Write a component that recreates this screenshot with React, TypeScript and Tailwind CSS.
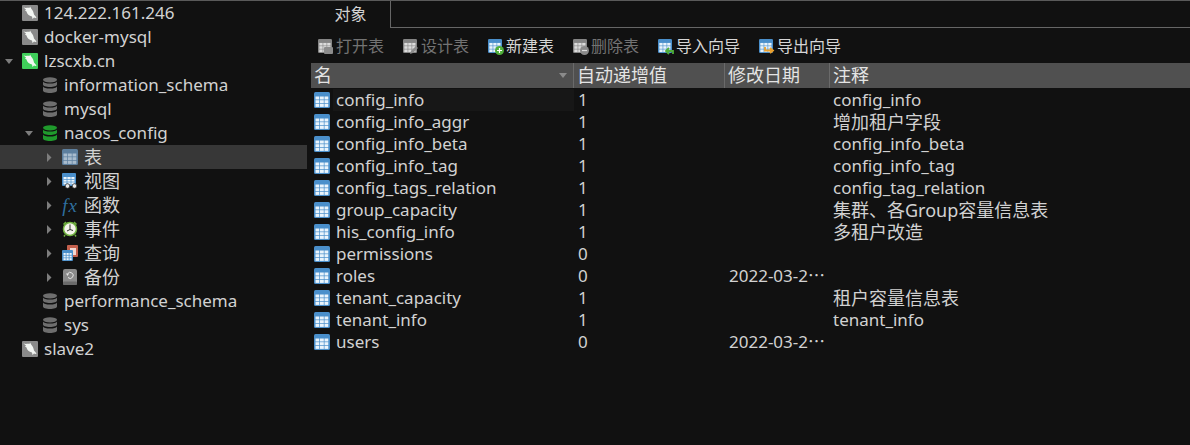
import type { ReactNode } from "react";

type IconProps = { dim?: boolean };

const font = "font-['Noto_Sans','Noto_Sans_CJK_SC',sans-serif]";
const hasCjk = (s: string) => /[\u3000-\u9fff]/.test(s);
const sizeFor = (s: string) => (hasCjk(s) ? "text-[18px]" : "text-[17px]");

function Dolphin({ color }: { color: string }) {
  return (
    <svg width="16" height="16" viewBox="0 0 16 16" className="shrink-0">
      <rect width="16" height="16" rx="1" fill={color} />
      <path
        d="M1.500 2.500 4 3c1-.5 2.500-.5 3.500 0L8 1.500 9.500 4c1.500 1.500 2 3.500 2.500 5.500l2.500 3-1 .5-1.500-.5-1.500 1.500-.5-2.500C7 11 5 9 4.500 6.500L3 5.500 4 4.500Z"
        fill="#f2f5f2"
      />
    </svg>
  );
}

function Cylinder({ color }: { color: string }) {
  return (
    <svg width="14" height="16" viewBox="0 0 14 16" className="shrink-0">
      <ellipse cx="7" cy="2.800" rx="7" ry="2.600" fill={color} />
      <path d="M0 4.500c1 1.500 3 2 7 2s6-.5 7-2v3C14 9 11 10 7 10S0 9 0 7.500Z" fill={color} />
      <path d="M0 9.500c1 1.500 3 2 7 2s6-.5 7-2v4C14 15 11 16 7 16s-7-1-7-2.500Z" fill={color} />
    </svg>
  );
}

function TableGlyph({ dim, size = 16 }: IconProps & { size?: number }) {
  const frame = dim ? "#858585" : "#4a8fcb";
  const cell = dim ? "#dcdcdc" : "#eaf4fc";
  const cells = [];
  for (let r = 0; r < 3; r++) {
    for (let c = 0; c < 3; c++) {
      cells.push(<rect key={`${r}-${c}`} x={1.500 + c * 4.500} y={4.500 + r * 3.700} width="3.800" height="3" fill={cell} />);
    }
  }
  return (
    <svg width={size} height={size} viewBox="0 0 16 16" className="shrink-0">
      <rect width="16" height="16" rx="1.500" fill={frame} />
      {cells}
    </svg>
  );
}

function TreeTable() {
  return (
    <svg width="16" height="16" viewBox="0 0 16 16" className="shrink-0">
      <rect width="16" height="16" rx="1.500" fill="#5d7f9e" />
      {[0, 1, 2].map((r) =>
        [0, 1, 2].map((c) => (
          <rect key={`${r}${c}`} x={1.500 + c * 4.500} y={4.500 + r * 3.700} width="3.800" height="3" fill="#a9bccd" />
        )),
      )}
    </svg>
  );
}

function ViewIcon() {
  return (
    <svg width="16" height="16" viewBox="0 0 16 16" className="shrink-0">
      <rect y="0" width="14" height="13" rx="1" fill="#4a8fcb" />
      <rect x="1.500" y="4" width="11" height="7.500" fill="#eaf4fc" />
      <path d="M1.500 6.500h11M1.500 9h11M5 4v7.500M9 4v7.500" stroke="#4a8fcb" strokeWidth=".7" />
      <circle cx="5.500" cy="13" r="2.300" fill="#e8e8e8" stroke="#222" strokeWidth=".7" />
      <circle cx="12.500" cy="13" r="2.300" fill="#e8e8e8" stroke="#222" strokeWidth=".7" />
    </svg>
  );
}

function ClockIcon() {
  return (
    <svg width="16" height="16" viewBox="0 0 16 16" className="shrink-0">
      <path d="M1.500 3.500 4 1M14.500 3.500 12 1M3 14l-1 1.500M13 14l1 1.500" stroke="#6fb13f" strokeWidth="1.500" />
      <circle cx="8" cy="8" r="6.500" fill="#f3f3ea" stroke="#6fb13f" strokeWidth="1.500" />
      <path d="M8 3.500V8.500l-3 1.500M8 8.500l3 1" stroke="#333" strokeWidth="1" fill="none" />
    </svg>
  );
}

function QueryIcon() {
  return (
    <svg width="16" height="16" viewBox="0 0 16 16" className="shrink-0">
      <rect x="5" y="0" width="11" height="12" rx="1" fill="#c4604d" />
      <rect x="8" y="3" width="6" height="7" fill="#f0d8d2" />
      <rect x="0" y="5" width="11" height="11" rx="1" fill="#4a8fcb" />
      {[0, 1, 2].map((r) =>
        [0, 1, 2].map((c) => (
          <rect key={`${r}${c}`} x={1.500 + c * 3} y={8 + r * 2.600} width="2.200" height="1.900" fill="#eaf4fc" />
        )),
      )}
    </svg>
  );
}

function BackupIcon() {
  return (
    <svg width="14" height="16" viewBox="0 0 14 16" className="shrink-0">
      <rect width="14" height="16" rx="2" fill="#8a8a8a" />
      <rect y="12.500" width="14" height="3.500" rx="1" fill="#6a6a6a" />
      <path d="M4.500 5A3 3 0 1 1 5 8.500" stroke="#e6e6e6" strokeWidth="1" fill="none" />
      <path d="M3 4.500h3L4.500 7Z" fill="#e6e6e6" />
    </svg>
  );
}

function Caret({ open }: { open?: boolean }) {
  return open ? (
    <svg width="8" height="5" viewBox="0 0 8 5" className="shrink-0">
      <path d="M0 0h8L4 5Z" fill="#7d7d7d" />
    </svg>
  ) : (
    <svg width="5" height="9" viewBox="0 0 5 9" className="shrink-0">
      <path d="M0 0l4.500 4.500L0 9Z" fill="#7d7d7d" />
    </svg>
  );
}

function TreeRow({
  indent,
  caret,
  icon,
  label,
  selected,
}: {
  indent: string;
  caret?: "open" | "closed";
  icon: ReactNode;
  label: string;
  selected?: boolean;
}) {
  return (
    <div className={`relative flex h-6 items-center ${indent} ${selected ? "bg-[#373737]" : ""}`}>
      {caret && (
        <span className="absolute -ml-[19px] flex w-3 justify-center">
          <Caret open={caret === "open"} />
        </span>
      )}
      <span className="flex w-4 justify-center">{icon}</span>
      <span className={`ml-[6px] whitespace-nowrap ${sizeFor(label)}`}>{label}</span>
    </div>
  );
}

const tree = [
  { indent: "pl-[22px]", icon: <Dolphin color="#8a8a8a" />, label: "124.222.161.246" },
  { indent: "pl-[22px]", icon: <Dolphin color="#8a8a8a" />, label: "docker-mysql" },
  { indent: "pl-[22px]", caret: "open" as const, icon: <Dolphin color="#3fce5a" />, label: "lzscxb.cn" },
  { indent: "pl-[42px]", icon: <Cylinder color="#6e6e6e" />, label: "information_schema" },
  { indent: "pl-[42px]", icon: <Cylinder color="#6e6e6e" />, label: "mysql" },
  { indent: "pl-[42px]", caret: "open" as const, icon: <Cylinder color="#1f9a2c" />, label: "nacos_config" },
  { indent: "pl-[62px]", caret: "closed" as const, icon: <TreeTable />, label: "表", selected: true },
  { indent: "pl-[62px]", caret: "closed" as const, icon: <ViewIcon />, label: "视图" },
  {
    indent: "pl-[62px]",
    caret: "closed" as const,
    icon: <span className="font-['Liberation_Serif',serif] text-[19px] leading-none tracking-[1px] text-[#2f6f9f] italic">fx</span>,
    label: "函数",
  },
  { indent: "pl-[62px]", caret: "closed" as const, icon: <ClockIcon />, label: "事件" },
  { indent: "pl-[62px]", caret: "closed" as const, icon: <QueryIcon />, label: "查询" },
  { indent: "pl-[62px]", caret: "closed" as const, icon: <BackupIcon />, label: "备份" },
  { indent: "pl-[42px]", icon: <Cylinder color="#6e6e6e" />, label: "performance_schema" },
  { indent: "pl-[42px]", icon: <Cylinder color="#6e6e6e" />, label: "sys" },
  { indent: "pl-[22px]", icon: <Dolphin color="#8a8a8a" />, label: "slave2" },
];

function Badge({ kind }: { kind: string }) {
  if (kind === "add") {
    return (
      <svg width="9" height="9" viewBox="0 0 9 9" className="absolute -right-0.5 -bottom-0.5">
        <circle cx="4.500" cy="4.500" r="4.500" fill="#4fae3a" />
        <path d="M4.500 2v5M2 4.500h5" stroke="#fff" strokeWidth="1.200" />
      </svg>
    );
  }
  if (kind === "remove") {
    return (
      <svg width="9" height="9" viewBox="0 0 9 9" className="absolute -right-0.5 -bottom-0.5">
        <circle cx="4.500" cy="4.500" r="4.500" fill="#8a8a8a" />
        <path d="M2 4.500h5" stroke="#ddd" strokeWidth="1.200" />
      </svg>
    );
  }
  if (kind === "open") {
    return <span className="absolute -right-px -bottom-px h-[7px] w-[9px] rounded-[1px] bg-[#8c8c8c]" />;
  }
  if (kind === "design") {
    return (
      <svg width="10" height="10" viewBox="0 0 10 10" className="absolute -right-0.5 -bottom-0.5">
        <path d="M1 9l1-3 5-5 2 2-5 5Z" fill="#8c8c8c" />
      </svg>
    );
  }
  if (kind === "import") {
    return (
      <svg width="11" height="9" viewBox="0 0 11 9" className="absolute -right-0.5 -bottom-0.5">
        <path d="M10 8V5H4M6 2L3 5l3 3" stroke="#4fae3a" strokeWidth="1.800" fill="none" />
      </svg>
    );
  }
  return (
    <svg width="11" height="9" viewBox="0 0 11 9" className="absolute -right-0.5 -bottom-0.5">
      <path d="M1 1v3.500h7M6 2l3 2.500L6 7" stroke="#e9a02e" strokeWidth="1.800" fill="none" />
    </svg>
  );
}

const tools = [
  { label: "打开表", kind: "open", dim: true, w: "w-[85px]" },
  { label: "设计表", kind: "design", dim: true, w: "w-[85px]" },
  { label: "新建表", kind: "add", dim: false, w: "w-[85px]" },
  { label: "删除表", kind: "remove", dim: true, w: "w-[85px]" },
  { label: "导入向导", kind: "import", dim: false, w: "w-[101px]" },
  { label: "导出向导", kind: "export", dim: false, w: "w-[101px]" },
];

const tables = [
  ["config_info", "1", "", "config_info"],
  ["config_info_aggr", "1", "", "增加租户字段"],
  ["config_info_beta", "1", "", "config_info_beta"],
  ["config_info_tag", "1", "", "config_info_tag"],
  ["config_tags_relation", "1", "", "config_tag_relation"],
  ["group_capacity", "1", "", "集群、各Group容量信息表"],
  ["his_config_info", "1", "", "多租户改造"],
  ["permissions", "0", "", ""],
  ["roles", "0", "2022-03-2⋯", ""],
  ["tenant_capacity", "1", "", "租户容量信息表"],
  ["tenant_info", "1", "", "tenant_info"],
  ["users", "0", "2022-03-2⋯", ""],
];

export default function App() {
  return (
    <div className={`flex h-[445px] w-[1190px] overflow-hidden border-t border-[#5a5a5a] bg-[#111111] text-[17px] text-[#d2d2d2] ${font}`}>
      <aside className="w-[307px] shrink-0">
        {tree.map((row) => (
          <TreeRow key={row.label} {...row} />
        ))}
      </aside>

      <main className="flex min-w-0 flex-1 flex-col">
        <div className="-mt-px flex h-[28px] shrink-0 border-b border-[#666666]">
          <div className="-mb-px flex w-[84px] items-center justify-center border-r border-[#666666] bg-[#111111] pl-[4px] text-[16px]">
            对象
          </div>
        </div>
        <div className="flex h-[35px] shrink-0 items-center pt-px pl-[11px] text-[16px]">
          {tools.map((t) => (
            <div key={t.label} className={`flex items-center gap-[4px] ${t.w} ${t.dim ? "text-[#737373]" : "text-[#d6d6d6]"}`}>
              <span className="relative flex">
                <TableGlyph dim={t.dim} size={14} />
                <Badge kind={t.kind} />
              </span>
              <span className="whitespace-nowrap">{t.label}</span>
            </div>
          ))}
        </div>
        <div className="ml-[4px] flex h-[25px] shrink-0 items-center bg-[#505050] text-[18px] text-[#e4e4e4]">
          <div className="relative flex h-full w-[263px] items-center border-r border-[#6a6a6a] pl-[3px]">
            名
            <svg width="8" height="5" viewBox="0 0 8 5" className="absolute top-[10px] right-[6px]">
              <path d="M0 0h8L4 5Z" fill="#8b8b8b" />
            </svg>
          </div>
          <div className="flex h-full w-[151px] items-center border-r border-[#6a6a6a] pl-[3px]">自动递增值</div>
          <div className="flex h-full w-[105px] items-center border-r border-[#6a6a6a] pl-[3px]">修改日期</div>
          <div className="flex h-full flex-1 items-center pl-[3px]">注释</div>
        </div>
        <div className="ml-[4px] pt-px">
          {tables.map(([name, inc, date, note], i) => (
            <div key={name} className="flex h-[22px] items-center">
              <div className="flex h-full w-[263px] items-center pl-[3px]">
                <TableGlyph />
                <span className={`ml-[3px] flex h-full flex-1 items-center pl-[3px] ${i === 0 ? "bg-[#171717]" : ""}`}>{name}</span>
              </div>
              <div className="w-[151px] pl-[4px]">{inc}</div>
              <div className="w-[105px] pl-[4px] whitespace-nowrap">{date}</div>
              <div className={`flex-1 pl-[3px] whitespace-nowrap ${sizeFor(note)}`}>{note}</div>
            </div>
          ))}
        </div>
      </main>
    </div>
  );
}
